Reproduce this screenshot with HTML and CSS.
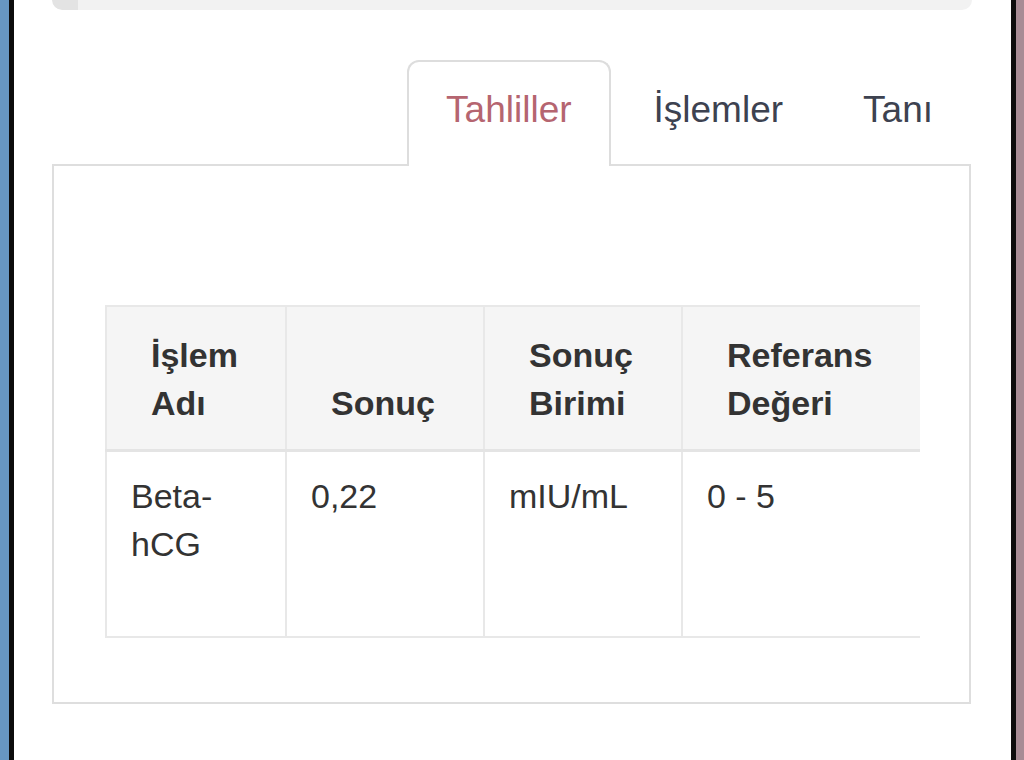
FILE: index.html
```html
<!DOCTYPE html>
<html lang="tr">
<head>
<meta charset="utf-8">
<link rel="stylesheet" href="styles.css">
</head>
<body>
<div class="frame">
  <div class="edge-left"></div>
  <div class="bar-dark"></div>
  <main class="main">
    <div class="topbox"><div class="topbox-accent"></div></div>
    <nav class="tabs">
      <div class="tab active">Tahliller</div>
      <div class="tab">İşlemler</div>
      <div class="tab">Tanı</div>
    </nav>
    <section class="panel">
      <div class="table-wrap">
        <table class="results">
          <colgroup>
            <col class="c1">
            <col class="c2">
            <col class="c3">
            <col class="c4">
          </colgroup>
          <thead>
            <tr>
              <th>İşlem<br>Adı</th>
              <th>Sonuç</th>
              <th>Sonuç<br>Birimi</th>
              <th>Referans<br>Değeri</th>
            </tr>
          </thead>
          <tbody>
            <tr>
              <td>Beta-<br>hCG</td>
              <td>0,22</td>
              <td>mIU/mL</td>
              <td>0 - 5</td>
            </tr>
          </tbody>
        </table>
      </div>
    </section>
  </main>
  <div class="bar-dark"></div>
  <div class="edge-right"></div>
</div>
</body>
</html>
```
FILE: styles.css
```css
html, body {
  margin: 0;
  padding: 0;
  background: #ffffff;
}
body {
  font-family: "Liberation Sans", Arial, sans-serif;
  color: #333333;
}
.frame {
  display: flex;
  width: 1024px;
  height: 760px;
  overflow: hidden;
}
.edge-left {
  width: 9px;
  background: #6796c1;
  flex: none;
}
.edge-right {
  width: 10px;
  background: #a88c95;
  flex: none;
}
.bar-dark {
  width: 5px;
  background: #0c0c0c;
  flex: none;
}
.main {
  flex: 1;
  padding: 0 38px 0 38px;
  background: #ffffff;
}
.topbox {
  height: 10px;
  width: 920px;
  background: #f2f2f2;
  border-radius: 0 0 14px 14px;
  overflow: hidden;
  display: flex;
}
.topbox-accent {
  width: 26px;
  background: #e3e3e3;
  border-radius: 0 0 0 14px;
}
.tabs {
  margin-top: 50px;
  display: flex;
  justify-content: flex-end;
  width: 921px;
  height: 105px;
  position: relative;
  z-index: 1;
}
.tab {
  box-sizing: border-box;
  height: 106px;
  padding: 26px 38px 0 38px;
  font-size: 37px;
  line-height: 44px;
  color: #3d4250;
  border: 2px solid transparent;
  border-bottom: none;
  border-radius: 12px 12px 0 0;
}
.tab.active {
  color: #b56570;
  border-color: #dddddd;
  background: #ffffff;
  margin-right: 3px;
  padding-left: 37px;
  padding-right: 37px;
}
.panel {
  box-sizing: border-box;
  width: 919px;
  height: 540px;
  margin-top: -1px;
  border: 2px solid #dedede;
  padding: 139px 49px 0 51px;
}
.table-wrap {
  width: 815px;
  overflow: hidden;
}
.results {
  border-collapse: collapse;
  width: 900px;
  table-layout: fixed;
  font-size: 34px;
  line-height: 48px;
  color: #333333;
}
.results th, .results td {
  border: 2px solid #e8e8e8;
  text-align: left;
}
.results th {
  background: #f5f5f5;
  font-weight: bold;
  vertical-align: bottom;
  padding: 24px 10px 22px 44px;
  height: 96px;
  border-bottom: 3px solid #e4e4e4;
}
.results td {
  vertical-align: top;
  padding: 20px 10px 0 24px;
  height: 164px;
}
.c1 { width: 180px; }
.c2 { width: 198px; }
.c3 { width: 198px; }
.c4 { width: 324px; }
```
